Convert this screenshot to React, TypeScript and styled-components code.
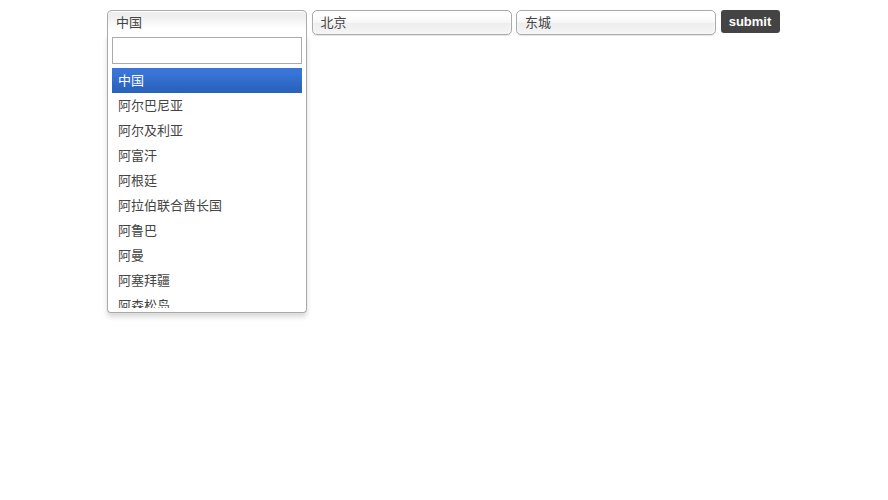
import React, { useState } from 'react'
import styled, { createGlobalStyle, css } from 'styled-components'

const GlobalStyle = createGlobalStyle`
  html, body {
    margin: 0;
    background: #fff;
  }
  * {
    box-sizing: border-box;
  }
`

const countries = [
  '中国',
  '阿尔巴尼亚',
  '阿尔及利亚',
  '阿富汗',
  '阿根廷',
  '阿拉伯联合酋长国',
  '阿鲁巴',
  '阿曼',
  '阿塞拜疆',
  '阿森松岛',
  '埃及',
  '埃塞俄比亚',
  '爱尔兰',
  '爱沙尼亚',
]

const Page = styled.div`
  display: flex;
  justify-content: flex-start;
  align-items: flex-start;
  min-height: 100vh;
  padding: 10px 0 0 107px;
  font-family: 'Liberation Sans', 'Noto Sans CJK SC', sans-serif;
`

const Form = styled.form`
  display: flex;
  align-items: flex-start;
  gap: 4.5px;
`

const Container = styled.div`
  position: relative;
  width: 200px;
  font-size: 13px;
  font-family: 'Noto Sans CJK SC', 'Liberation Sans', sans-serif;
`

const Single = styled.a<{ $open?: boolean }>`
  display: block;
  height: 25px;
  padding: 0 0 0 8px;
  border: 1px solid #aaa;
  border-radius: 5px;
  color: #444;
  line-height: 21px;
  text-decoration: none;
  white-space: nowrap;
  overflow: hidden;
  cursor: pointer;
  background: linear-gradient(#fff 20%, #f6f6f6 50%, #eee 52%, #f4f4f4 100%);
  box-shadow: 0 0 3px #fff inset, 0 1px 1px rgba(0, 0, 0, 0.1);

  ${p =>
    p.$open &&
    css`
      border-bottom-left-radius: 0;
      border-bottom-right-radius: 0;
      border-bottom-color: transparent;
      background: linear-gradient(#eee 20%, #fff 80%);
      box-shadow: 0 1px 0 #fff inset;
    `}
`

const Drop = styled.div`
  position: absolute;
  top: 100%;
  left: 0;
  z-index: 1010;
  width: 100%;
  margin-top: -1px;
  border: 1px solid #aaa;
  border-top: 0;
  border-radius: 0 0 4px 4px;
  background: #fff;
  box-shadow: 0 4px 5px rgba(0, 0, 0, 0.15);
`

const Search = styled.div`
  padding: 3px 4px 4px;
`

const SearchInput = styled.input`
  display: block;
  width: 100%;
  height: 27px;
  margin: 0;
  padding: 4px 20px 4px 5px;
  border: 1px solid #aaa;
  border-radius: 0;
  outline: 0;
  font-size: 13px;
  font-family: inherit;
  background: #fff;
`

const Results = styled.ul`
  margin: 0 4px 4px 0;
  padding: 0 0 0 4px;
  max-height: 240px;
  overflow-x: hidden;
  overflow-y: auto;
  color: #444;
  scrollbar-width: none;
  &::-webkit-scrollbar {
    display: none;
  }
`

const Option = styled.li<{ $highlighted?: boolean }>`
  margin: 0;
  padding: 4px 6px 6px;
  list-style: none;
  line-height: 15px;
  white-space: nowrap;
  cursor: pointer;

  ${p =>
    p.$highlighted &&
    css`
      color: #fff;
      background-color: #3875d7;
      background-image: linear-gradient(#3875d7 20%, #2a62bc 90%);
    `}
`

const Submit = styled.button`
  height: 23px;
  width: 59px;
  padding: 0;
  border: 0;
  border-radius: 3px;
  background: #444;
  color: #fff;
  font-family: 'Liberation Sans', Arial, sans-serif;
  font-weight: bold;
  font-size: 13px;
  cursor: pointer;
`

const Select = ({ value, open, options }: { value: string; open?: boolean; options?: string[] }) => {
  const [active, setActive] = useState(0)
  return (
    <Container>
      <Single $open={open}>
        <span>{value}</span>
      </Single>
      {open && options && (
        <Drop>
          <Search>
            <SearchInput type='text' autoComplete='off' />
          </Search>
          <Results>
            {options.map((o, i) => (
              <Option key={o} $highlighted={i === active} onMouseEnter={() => setActive(i)}>
                {o}
              </Option>
            ))}
          </Results>
        </Drop>
      )}
    </Container>
  )
}

export default function App() {
  return (
    <Page>
      <GlobalStyle />
      <Form onSubmit={e => e.preventDefault()}>
        <Select value='中国' open options={countries} />
        <Select value='北京' />
        <Select value='东城' />
        <Submit type='submit'>submit</Submit>
      </Form>
    </Page>
  )
}
